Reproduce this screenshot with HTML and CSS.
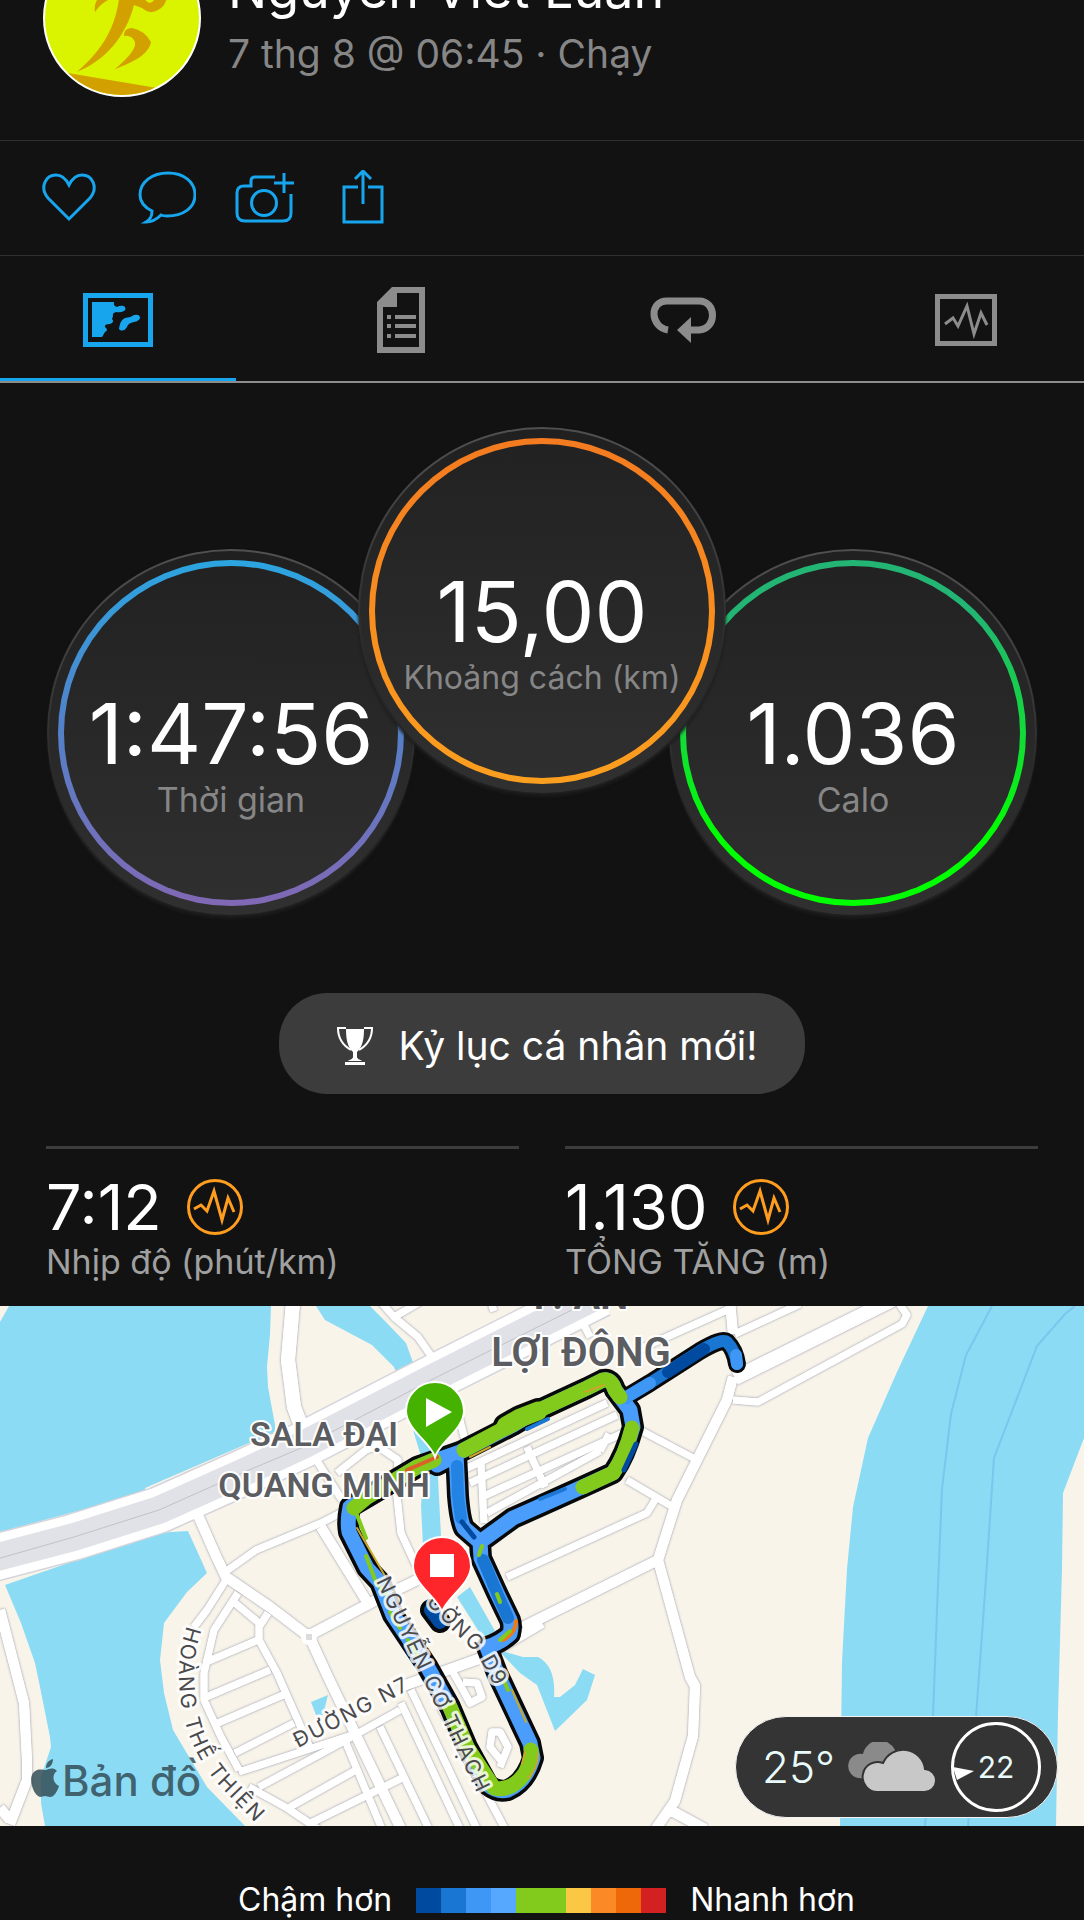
FILE: index.html
```html
<!DOCTYPE html>
<html lang="vi">
<head>
<meta charset="utf-8">
<meta name="viewport" content="width=device-width, initial-scale=1">
<title>Chạy bộ</title>
<link rel="stylesheet" href="styles.css">
</head>
<body>
<header class="athlete">
  <svg class="avatar" viewBox="0 0 160 160" aria-hidden="true">
    <defs><clipPath id="face"><circle cx="80" cy="80" r="77"/></clipPath></defs>
    <circle cx="80" cy="80" r="79" fill="#fff"/>
    <circle cx="80" cy="80" r="77" fill="#daf400"/>
    <g clip-path="url(#face)" fill="#d2a100">
      <path d="M78 50C76 90 58 114 35 134 64 122 84 98 92 67L100 70Q108 77 116 72 124 68 125 58H114Q112 65 107 65L98 58 96 50z"/>
      <path d="M53 74Q51 64 60 56L78 50 80 58Q62 60 53 74z"/>
      <path d="M82 96Q83 90 90 90 102 92 109 104C107 116 92 124 73 131Q98 110 92 102 88 97 82 98z"/>
      <path d="M20 134 115 150 110 160H20z"/>
    </g>
  </svg>
  <div class="athlete-text">
    <h1 class="athlete-name">Nguyễn Viết Luân</h1>
    <p class="athlete-meta">7 thg 8 @ 06:45 · Chạy</p>
  </div>
</header>

<div class="actions">
  <button class="action" aria-label="Thích">
    <svg width="54" height="50" viewBox="0 0 54 50"><path d="M27 46 6 25C-3 14 4 2 14 2c6 0 10 4 13 10C30 6 34 2 40 2c10 0 17 12 8 23z"/></svg>
  </button>
  <button class="action" aria-label="Bình luận">
    <svg width="58" height="54" viewBox="0 0 58 54"><path d="M14 40C6 36 2 31 2 24 2 11 14 2 30 2s27 9 27 22-12 21-28 21c-3 0-4 0-6-1-4 4-8 7-15 7 5-3 6-6 6-11z"/></svg>
  </button>
  <button class="action" aria-label="Thêm ảnh">
    <svg width="60" height="52" viewBox="0 0 60 52"><path d="M40 5H20q-4 0-4 4v5H9q-7 0-7 7v20q0 8 8 8h38q8 0 8-8V22M49 1v20M39 11h20"/><circle cx="29" cy="31" r="12.500"/></svg>
  </button>
  <button class="action" aria-label="Chia sẻ">
    <svg width="42" height="56" viewBox="0 0 42 56"><path d="M16 17H2v35h38V17H26M21 34V1M13 9l8-8 8 8"/></svg>
  </button>
</div>

<nav class="tabs" aria-label="Chi tiết hoạt động">
  <button class="tab tab-active" aria-label="Bản đồ">
    <svg width="70" height="54" viewBox="0 0 70 54" fill="currentColor"><path fill-rule="evenodd" d="M0 0h70v54H0zM5 5v44h60V5z"/><path d="M9 9h22q-1 4 3 5 3-2 7-1 3 3 0 5-4 2-8 1-4 1-3 4l-1 3q3 3-2 5-6 0-5 3 4 3 0 5l-3 5H9z"/><path d="M36 36q1-9 6-11 5 0 9-3 6-1 6 3-1 3-6 4-6 1-7 5-3 5-7 3z"/></svg>
  </button>
  <button class="tab" aria-label="Số liệu">
    <svg width="48" height="66" viewBox="0 0 48 66" fill="currentColor"><path fill-rule="evenodd" d="M15 0h33v66H0V15zM20 6v14H6v40h36V6z"/><path d="M10 28h4v4h-4zm8 0h21v4H18zM10 37h4v4h-4zm8 0h21v4H18zM10 47h4v4h-4zm8 0h21v4H18z"/></svg>
  </button>
  <button class="tab" aria-label="Vòng">
    <svg width="68" height="46" viewBox="0 0 68 46" fill="none"><path d="M19 33C1 30 0 4 18 4h32c18 0 18 28 0 29h-8" stroke="currentColor" stroke-width="7"/><path d="M28 33 42 20v26z" fill="currentColor"/></svg>
  </button>
  <button class="tab" aria-label="Biểu đồ">
    <svg width="62" height="52" viewBox="0 0 62 52" fill="none" stroke="currentColor"><path d="M2.500 2.500h57v47h-57z" stroke-width="5"/><path d="m10 30 8-6 5 8 9-20 7 28 7-21 6 12" stroke-width="3"/></svg>
  </button>
</nav>

<main>
  <section class="dials">
    <div class="dial dial-time"><div class="ring">
      <span class="dial-value">1:47:56</span><span class="dial-label">Thời gian</span>
    </div></div>
    <div class="dial dial-distance"><div class="ring">
      <span class="dial-value">15,00</span><span class="dial-label">Khoảng cách (km)</span>
    </div></div>
    <div class="dial dial-calories"><div class="ring">
      <span class="dial-value">1.036</span><span class="dial-label">Calo</span>
    </div></div>
  </section>

  <button class="record">
    <svg width="36" height="40" viewBox="0 0 36 40" aria-hidden="true"><path d="M9 3h18c0 14-3 19-7 23v5c0 2 4 3 5 4H11c1-1 5-2 5-4v-5C12 22 9 17 9 3zM8 36h20v3H8z" fill="#fff"/><path d="M9 2H1c0 12 6 18 13 22M27 2h8c0 12-6 18-13 22" fill="none" stroke="#fff" stroke-width="2"/></svg>
    Kỷ lục cá nhân mới!
  </button>

  <section class="stats">
    <div class="stat">
      <div class="stat-row"><span class="stat-value">7:12</span>
        <svg class="stat-icon" viewBox="0 0 56 56"><circle cx="28" cy="28" r="26.500"/><path d="m7 30 7-4 6 6 7-20 8 29 6-22 6 14"/></svg></div>
      <p class="stat-label">Nhịp độ (phút/km)</p>
    </div>
    <div class="stat">
      <div class="stat-row"><span class="stat-value">1.130</span>
        <svg class="stat-icon" viewBox="0 0 56 56"><circle cx="28" cy="28" r="26.500"/><path d="m7 30 7-4 6 6 7-20 8 29 6-22 6 14"/></svg></div>
      <p class="stat-label">TỔNG TĂNG (m)</p>
    </div>
  </section>

  <section class="map">
    <svg class="map-canvas" viewBox="0 0 1084 520" role="img" aria-label="Bản đồ đường chạy">
      <defs>
        <path id="st-thach" d="M376 275 484 502"/>
        <path id="st-d9" d="M390 250 428 299 442 313 454 326 468 339Q477 349 483 359L496 382"/>
        <path id="st-n7" d="M298 442 424 376"/>
        <path id="st-thien" d="M187 320Q178 345 179 376 180 400 188 426 198 454 217 477L270 532"/>
        <path id="pin" d="M0 46C-4 32-29 18-29 0a29 29 0 0 1 58 0C29 18 4 32 0 46z"/>
        <g id="roads">
          <path class="r7" d="M380-5 394 11 418 31 434 54M394 11 420-4M490-6 494 5M228 264 256 244 321 217 346 204M317 155 342 194M337 167 366 144 385 137M373 137 398 154 396 181 401 227 418 264M459 111 465 134"/>
          <path class="r7" d="M463 164 607 97M470 177 617 109M484 190 623 127M487 207 600 145M481 158 484 217M527 141 545 181M600 145 609 128"/>
          <path class="r7" d="M640 43 727 4M735 28 800-2M733 94 758 96 902 18 907 9 898-4M583 17 590 31M640 124 697 154M627 174 673 201M655 194 647 207 507 271"/>
          <path class="r7" d="M238 287 214 324 204 367 204 394 221 431 239 464M249 481 287 502 318 523M226 274 207 304 194 321M235 297 259 317 259 334 277 367 311 444M268 307 259 321M204 357 258 334M204 392 270 364M218 417 283 389M235 447 294 417M239 466 355 428M259 481 328 444 400 404M290 501 356 464M311 517 404 471"/>
          <path class="r7" d="M380 421 429 523M401 397 460 523M411 384 477 523M346 437 382 523M440 400 505 523M450 361 463 384 470 397 482 391 477 377 463 376M503 457 490 441 492 426 500 426 508 441 500 461"/>
          <path class="r10" d="M197 207 216 250 226 271 270 301 308 330M321 221 366 294M730-5 733 28M733 71 727 94 677 194 658 254 690 371 695 380 693 430 675 495 655 524M658 254 523 321M308 330 380 292 417 274M311 334 328 371 401 523M400 381 484 351 542 317M0 304 24 397 27 454 27 474 10 518M0 502 10 514M672 505 705 523"/>
          <path class="r14" d="M293-4 288 54 294 101 303 125M735 72 892-6"/>
        </g>
        <path id="loop" d="M437 159 456 149Q457 165 458 190 460 214 464 222L480 236 513 212 540 200 580 182 613 167Q625 150 633 121L630 104 615 84Q611 72 603 74L587 82 533 107 513 119 460 146 417 161 367 191 350 201Q347 215 349 226L367 262 380 276 393 309 427 360 450 401 467 441 488 479Q498 487 508 484 526 476 533 452L530 437 497 367 487 341Q500 337 510 328 512 320 510 314L497 287 481 252 480 236"/>
        <path id="spur" d="M625 92 650 77 700 45Q722 32 727 36 735 44 737 58"/>
      </defs>
      <rect width="1084" height="520" fill="#f8f4e9"/>
      <g class="water">
        <path d="M0 16 9 0H271L270 28 267 61 268 81 275 119V129L249 137 145 182 147 188 74 206 0 226z"/>
        <path d="M5 279 77 254 155 227 188 225 207 267 187 286 164 317 160 354 164 387 173 424 207 481 245 520H45L41 497V471L51 441 50 431 40 381 35 357 21 317z"/>
        <path d="M316 0H370L384 14 406 37 415 62 398 71 394 61 372 39 325 14zM413 124 440 145 438 172 441 230 446 262H428L423 240 421 200 424 160zM457 291 470 281 495 325 483 332zM498 344 523 351 538 351Q556 360 554 391H560L575 379 583 363 595 369 587 394 555 425 537 379 520 367zM311 396 328 389 323 409H316z"/>
        <path d="M928 0 897 66 868 132 853 201 847 263 842 356 840 520H1056L1058 407 1062 263 1063 187 1084 132V0z"/>
      </g>
      <path d="M992 0 966 49 951 108 942 183 937 304 933 411 925 520M1075 0 1065 8 1037 40 994 152 985 287 976 411 968 520" fill="none" stroke="#7cc6ee" stroke-width="2"/>
      <use href="#roads" class="road-edge"/>
      <path class="way edge" d="M-10 253 74 231 159 204 242 167 301 140 435 71 600-12"/>
      <use href="#roads" class="road-fill"/>
      <circle cx="309" cy="331" r="8" fill="#fff"/><path d="M306 328h6v6h-6z" fill="#dcdcdc"/>
      <path class="way white" d="M-10 253 74 231 159 204 242 167 301 140 435 71 600-12"/>
      <path class="way grey" d="M-10 253 74 231 159 204 242 167 301 140 435 71 600-12"/>
      <path class="way line" d="M-10 255 74 231 159 204 242 167 301 142 435 72 600-10"/>

      <g class="route">
        <g stroke="#08090b" stroke-width="22"><use href="#loop"/><use href="#spur" stroke-width="18"/><path d="M431 304 440 316"/></g>
        <path d="M506 120 520 112 538 105" stroke="#08090b" stroke-width="26"/>
        <use href="#loop" stroke="#4a9dfa" stroke-width="15"/>
        <use href="#spur" stroke="#1976d2" stroke-width="12"/>
        <path d="M625 92 650 77" stroke="#3e96f5" stroke-width="12"/><path d="M668 66 704 43" stroke="#004a9f" stroke-width="12"/><path d="M736 49 737 58" stroke="#3e96f5" stroke-width="12"/>
        <path d="M431 304 440 316" stroke="#004a9f" stroke-width="14"/>
        <g stroke="#82ca1c" stroke-width="15">
          <path d="M354 202 367 191 417 161 434 154M464 144 513 118 533 107 587 82 603 74Q611 72 615 84L620 91M632 122Q625 150 613 167L583 181"/>
          <path d="M531 444Q532 453 525 467 512 486 494 482L467 441 450 401"/>
        </g>
        <path d="M506 120 520 112 538 105" stroke="#82ca1c" stroke-width="19"/>
        <path d="M457 160 458 190 461 212" stroke="#2383e2" stroke-width="12"/>
        <path d="M462 216 474 231M636 138 624 164" stroke="#004a9f" stroke-width="5"/>
        <path d="M540 193 565 183M527 123 548 113" stroke="#1c78d6" stroke-width="4"/>
        <path d="M483 254 497 287 508 312" stroke="#1976d2" stroke-width="12"/>
        <path d="M503 334Q516 327 516 315" stroke="#ef7a14" stroke-width="4"/>
        <path d="M500 334 510 325M482 240 479 249M497 288 500 296" stroke="#82ca1c" stroke-width="4"/>
        <path d="M355 204 366 232M366 250 376 276 386 288M390 306 400 322M408 334 418 350M500 366 508 384" stroke="#82ca1c" stroke-width="4"/>
        <path d="M357 222 385 270M585 86 604 79M470 151 490 141M538 448Q538 462 528 472M512 384 526 416M525 446 522 458M400 168 436 152" stroke="#c9a72a" stroke-width="2"/>
        <path d="M407 164 437 151" stroke="#d8622a" stroke-width="4"/>
      </g>

      <g class="street">
        <text><textPath href="#st-thach">NGUYỄN CƠ THẠCH</textPath></text>
        <text text-anchor="end"><textPath href="#st-d9" startOffset="100%">ƯỜNG D9</textPath></text>
        <text><textPath href="#st-n7">ĐƯỜNG N7</textPath></text>
        <text><textPath href="#st-thien">HOÀNG THẾ THIỆN</textPath></text>
      </g>
      <g class="place">
        <text x="324" y="140">SALA ĐẠI</text>
        <text x="324" y="191">QUANG MINH</text>
        <text class="place-big" x="581" y="3">P. AN</text>
        <text class="place-big" x="581" y="60">LỢI ĐÔNG</text>
      </g>
      <g transform="translate(435 105)"><use href="#pin" fill="#46b200" stroke="#fff" stroke-width="2"/><path d="M-9-13 17 1-9 16z" fill="#fff"/></g>
      <g transform="translate(442 260)"><use href="#pin" fill="#ff262b" stroke="#fff" stroke-width="2"/><path d="M-12-12h24v23h-24z" fill="#fff"/></g>
      <g class="brand">
        <path d="M46 464c3-1 7-3 11 1-5 3-5 12 2 15-2 6-5 11-9 11-2 0-3-1-5-1s-3 1-5 1c-6-1-13-19-6-25 4-4 9-2 12-2zM46 462c0-5 3-8 7-9 0 5-3 9-7 9z"/>
        <text x="62" y="490">Bản đồ</text>
      </g>
    </svg>
    <div class="weather">
      <span class="weather-temp">25°</span>
      <svg width="90" height="50" viewBox="0 0 90 50" aria-hidden="true"><path d="M13 36a12 12 0 0 1 5-24 17 17 0 0 1 32-4L38 38z" fill="#8a8a8a"/><path d="M33 50a15 15 0 1 1 5-29 22 22 0 0 1 42 6 11.500 11.500 0 0 1-1 23z" fill="#c8c8c8" stroke="#343434" stroke-width="2"/></svg>
      <div class="wind">
        <svg class="wind-dial" viewBox="0 0 90 90" aria-hidden="true"><circle cx="45" cy="45" r="43.500" fill="none" stroke="#fff" stroke-width="3"/><path d="M2 45 23 49 6 58z" fill="#fff"/></svg>
        <span class="wind-speed">22</span>
      </div>
    </div>
  </section>
</main>

<footer class="legend">
  <span>Chậm hơn</span>
  <div class="scale"><i class="c1"></i><i class="c2"></i><i class="c3"></i><i class="c4"></i><i class="c5"></i><i class="c5"></i><i class="c6"></i><i class="c7"></i><i class="c8"></i><i class="c9"></i></div>
  <span>Nhanh hơn</span>
</footer>
</body>
</html>
```
FILE: styles.css
```css
* { box-sizing: border-box; }
body {
  margin: 0;
  background: #121212;
  color: #fff;
  font-family: Inter, "Noto Sans", sans-serif;
  overflow-x: hidden;
}
h1, p { margin: 0; font-weight: 400; }
button { background: none; border: 0; padding: 0; margin: 0; color: inherit; font: inherit; cursor: pointer; }
svg { display: block; flex: none; }

/* The header is partly scrolled out of view */
.athlete {
  display: flex;
  gap: 26px;
  margin-top: -62px;
  padding: 0 42px 42px;
  border-bottom: 1px solid #303030;
}
.avatar { width: 160px; height: 160px; }
.athlete-text { display: flex; flex-direction: column; gap: 10px; padding-top: 22px; }
.athlete-name { font-size: 52px; line-height: 60px; white-space: nowrap; }
.athlete-meta { font-size: 39px; line-height: 48px; color: #868686; }

.actions {
  display: flex;
  gap: 38px;
  height: 115px;
  padding-left: 39px;
  border-bottom: 1px solid #303030;
}
.action { width: 60px; display: flex; align-items: center; justify-content: center; }
.action svg { fill: none; stroke: #17a5ed; stroke-width: 3; }

.tabs {
  display: flex;
  justify-content: space-between;
  height: 127px;
  border-bottom: 2px solid #8c8c8c;
}
.tab {
  width: 236px;
  display: flex;
  align-items: center;
  justify-content: center;
  color: #8c8c8c;
  border-bottom: 3px solid transparent;
  padding-top: 5px;
}
.tab-active { color: #17a5ed; border-bottom-color: #17a5ed; }

.dials { display: flex; justify-content: center; padding-top: 44px; }
.dial {
  width: 368px;
  height: 368px;
  padding: 9px;
  border-radius: 50%;
  border: 2px solid transparent;
  background: linear-gradient(#202020, #303030) padding-box, linear-gradient(#505050, #2b2b2b 60%, #1e1e1e) border-box;
  box-shadow: 0 2px 3px #1b1b1b;
}
.dial-time, .dial-calories { margin-top: 122px; }
.dial-distance { margin: 0 -57px; position: relative; }
.ring {
  height: 100%;
  border: 6px solid transparent;
  border-radius: 50%;
  padding-top: 126px;
  display: flex;
  flex-direction: column;
  align-items: center;
  gap: 4px;
}
.dial-time .ring { background: linear-gradient(#222, #2f2f2f) padding-box, linear-gradient(#2ba5e0, #5580c8 50%, #8168b4) border-box; }
.dial-distance .ring { background: linear-gradient(#222, #2f2f2f) padding-box, linear-gradient(#f47b20, #fb9f1f) border-box; }
.dial-calories .ring { background: linear-gradient(#222, #2f2f2f) padding-box, linear-gradient(#22b573 15%, #10e030 55%, #00ff00 80%) border-box; }
.dial-value { font-size: 84px; line-height: 84px; }
.dial-label { font-size: 34px; line-height: 40px; color: #868686; white-space: nowrap; }
.dial-distance .dial-label { font-size: 32px; }

.record {
  display: flex;
  align-items: center;
  justify-content: center;
  gap: 26px;
  width: 526px;
  height: 101px;
  padding: 4px 0 0 10px;
  margin: 76px auto 52px;
  border-radius: 48px;
  background: #3c3c3c;
  font-size: 39px;
  line-height: 48px;
}

.stats { display: grid; grid-template-columns: 1fr 1fr; gap: 46px; padding: 0 46px 24px; }
.stat { border-top: 3px solid #3c3c3c; padding-top: 28px; }
.stat-row { display: flex; align-items: center; gap: 25px; height: 60px; }
.stat-value { font-size: 63px; line-height: 60px; }
.stat-icon { width: 56px; height: 56px; fill: none; stroke: #ff9d1e; stroke-width: 3; }
.stat-label { margin-top: 5px; font-size: 34px; line-height: 40px; color: #a0a0a0; }

.map { position: relative; overflow: hidden; }
.map-canvas { width: 100%; height: auto; }
.water { fill: #8bdbf5; }
.r7 { stroke-width: 7; }
.r10 { stroke-width: 10; }
.r14 { stroke-width: 14; }
#roads { fill: none; stroke-linejoin: round; }
.road-fill { stroke: #fff; }
.road-edge { stroke: #fff; filter: drop-shadow(0 0 1px #aaaab4) drop-shadow(0 0 1px #c8c8d0); }
.way { fill: none; stroke-linejoin: round; }
.edge { stroke: #d4d4da; stroke-width: 48; }
.white { stroke: #fff; stroke-width: 45; }
.grey { stroke: #e1e2e7; stroke-width: 28; }
.line { stroke: #c2c2c4; stroke-width: 1; }
.route { fill: none; stroke-linejoin: round; stroke-linecap: round; }
.street { font-size: 21px; letter-spacing: 2px; fill: #4a4a4c; stroke: #ffffffd0; stroke-width: 6; paint-order: stroke; stroke-linejoin: round; }
.place { font-family: Roboto, sans-serif; font-size: 34px; font-weight: 600; text-anchor: middle; fill: #5c5d61; stroke: #fff; stroke-width: 4; paint-order: stroke; stroke-linejoin: round; }
.place-big { font-size: 40px; }
.brand { fill: #334d57; fill-opacity: .85; font-size: 42px; font-weight: 500; }

.weather {
  position: absolute;
  right: 26px;
  bottom: 8px;
  display: flex;
  align-items: center;
  gap: 10px;
  width: 323px;
  height: 102px;
  padding: 0 16px 0 26px;
  border-radius: 51px;
  border: 1px solid #f4f4f4;
  background: #343434;
  color: #e8fafa;
}
.weather-temp { font-size: 44px; line-height: 52px; font-weight: 300; }
.wind { position: relative; display: grid; place-items: center; width: 90px; height: 90px; margin-left: auto; }
.wind-dial { position: absolute; inset: 0; }
.wind-speed { font-size: 30px; line-height: 40px; }

.legend {
  display: flex;
  justify-content: center;
  align-items: center;
  gap: 24px;
  padding: 54px 0 0 9px;
  font-size: 32px;
  line-height: 40px;
}
.scale { display: flex; width: 250px; height: 25px; }
.scale i { flex: 1; }
.c1 { background: #004a9f; }
.c2 { background: #1976d2; }
.c3 { background: #3e96f5; }
.c4 { background: #56a8ff; }
.c5 { background: #82ca1c; }
.c6 { background: #fbc846; }
.c7 { background: #fb8a26; }
.c8 { background: #ee6708; }
.c9 { background: #d32020; }
```
